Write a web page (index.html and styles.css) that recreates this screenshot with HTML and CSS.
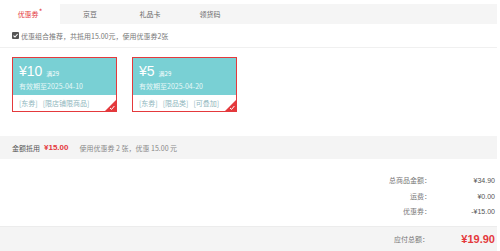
FILE: index.html
```html
<!DOCTYPE html>
<html lang="zh-CN">

<head>
    <meta charset="UTF-8">
    <meta name="viewport" content="width=device-width, initial-scale=1.0">
    <title>优惠券</title>
    <link rel="stylesheet" href="styles.css">
</head>

<body>
    <div class="order">
        <ul class="tabs">
            <li class="active">优惠券<i>*</i></li>
            <li>京豆</li>
            <li>礼品卡</li>
            <li>领货码</li>
        </ul>
        <div class="option">
            <span class="check">
                <svg width="7" height="7" viewBox="0 0 7 7"><rect width="7" height="7" rx="1" fill="#555"/><path d="M1.5 3.6 L3 5 L5.6 2" stroke="#fff" stroke-width="1.1" fill="none"/></svg>
            </span>
            优惠组合推荐，共抵用15.00元，使用优惠券2张
        </div>
        <div class="coupons">
            <div class="coupon">
                <div class="top">
                    <div class="price"><b>¥10</b><span>满29</span></div>
                    <div class="date">有效期至2025-04-10</div>
                </div>
                <div class="bottom"><span>[东券]</span><span>[限店铺限商品]</span></div>
                <span class="mark">
                    <svg width="11" height="11" viewBox="0 0 11 11"><path d="M11 0 L11 11 L0 11 Z" fill="#e4393c"/><path d="M5 8 L6.6 9.4 L9.4 6" stroke="#fff" stroke-width="1" fill="none"/></svg>
                </span>
            </div>
            <div class="coupon">
                <div class="top">
                    <div class="price"><b>¥5</b><span>满29</span></div>
                    <div class="date">有效期至2025-04-20</div>
                </div>
                <div class="bottom"><span>[东券]</span><span>[限品类]</span><span>[可叠加]</span></div>
                <span class="mark">
                    <svg width="11" height="11" viewBox="0 0 11 11"><path d="M11 0 L11 11 L0 11 Z" fill="#e4393c"/><path d="M5 8 L6.6 9.4 L9.4 6" stroke="#fff" stroke-width="1" fill="none"/></svg>
                </span>
            </div>
        </div>
        <div class="used">
            <span class="label">金额抵用</span>
            <span class="money">¥15.00</span>
            <span class="desc">使用优惠券 2 张，优惠 15.00 元</span>
        </div>
        <div class="summary">
            <div class="row"><span class="k">总商品金额：</span><span class="v">¥34.90</span></div>
            <div class="row"><span class="k">运费：</span><span class="v">¥0.00</span></div>
            <div class="row"><span class="k">优惠券：</span><span class="v">-¥15.00</span></div>
        </div>
        <div class="total">
            <span class="k">应付总额：</span><span class="v">¥19.90</span>
        </div>
    </div>
</body>

</html>
```
FILE: styles.css
```css
body {
    margin: 0;
    font-family: "Noto Sans CJK SC", "Liberation Sans", sans-serif;
    font-size: 7px;
    color: #666;
    background-color: #fff;
}

.order {
    width: 497px;
    padding-top: 4px;
}

.tabs {
    display: flex;
    margin: 0;
    padding: 0;
    list-style: none;
    height: 20px;
    background-color: #f5f5f5;
}

.tabs li {
    width: 60px;
    line-height: 20px;
    text-align: center;
    color: #666;
}

.tabs li.active {
    background-color: #fff;
    color: #e4393c;
}

.tabs li i {
    font-style: normal;
    font-size: 8px;
    position: relative;
    top: -2px;
}

.option {
    display: flex;
    align-items: center;
    height: 23px;
    padding-left: 12px;
    border-bottom: 1px solid #f0f0f0;
    color: #777;
}

.check {
    display: flex;
    margin-right: 2px;
}

.coupons {
    display: flex;
    gap: 15px;
    padding: 9px 12px 0;
    height: 79px;
}

.coupon {
    position: relative;
    width: 103px;
    height: 53px;
    border: 1px solid #e4393c;
}

.coupon .top {
    height: 37px;
    padding-left: 6px;
    background-color: #79d0d4;
    color: #fff;
    box-sizing: border-box;
}

.price {
    display: flex;
    align-items: baseline;
    height: 22px;
    padding-top: 4px;
    box-sizing: border-box;
}

.price b {
    font-family: "Liberation Sans", sans-serif;
    font-weight: normal;
    font-size: 14px;
    line-height: 18px;
}

.price span {
    font-size: 6px;
    margin-left: 4px;
}

.date {
    line-height: 12px;
    color: #e8f8f8;
}

.bottom {
    display: flex;
    gap: 5px;
    line-height: 16px;
    padding-left: 6px;
    color: #8fb6bd;
}

.mark {
    position: absolute;
    right: 0;
    bottom: 0;
    display: flex;
}

.used {
    display: flex;
    align-items: center;
    height: 23px;
    padding-left: 12px;
    background-color: #f4f4f4;
}

.used .label {
    color: #555;
}

.used .money {
    font-family: "Liberation Sans", sans-serif;
    font-weight: bold;
    color: #e4393c;
    font-size: 8px;
    margin: 0 11px 0 4px;
}

.used .desc {
    color: #888;
}

.summary {
    padding: 14px 0 6px;
}

.row {
    display: flex;
    justify-content: flex-end;
    line-height: 15.5px;
}

.k {
    color: #777;
}

.row .v {
    width: 64px;
    padding-right: 2px;
    text-align: right;
    font-family: "Liberation Sans", sans-serif;
    color: #555;
}

.total {
    display: flex;
    justify-content: flex-end;
    align-items: center;
    height: 25px;
    border-top: 1px solid #ececec;
    background-color: #f4f4f4;
}

.total .v {
    width: 66px;
    padding-right: 2px;
    text-align: right;
    font-family: "Liberation Sans", sans-serif;
    font-weight: bold;
    font-size: 11px;
    color: #e4393c;
}
```
